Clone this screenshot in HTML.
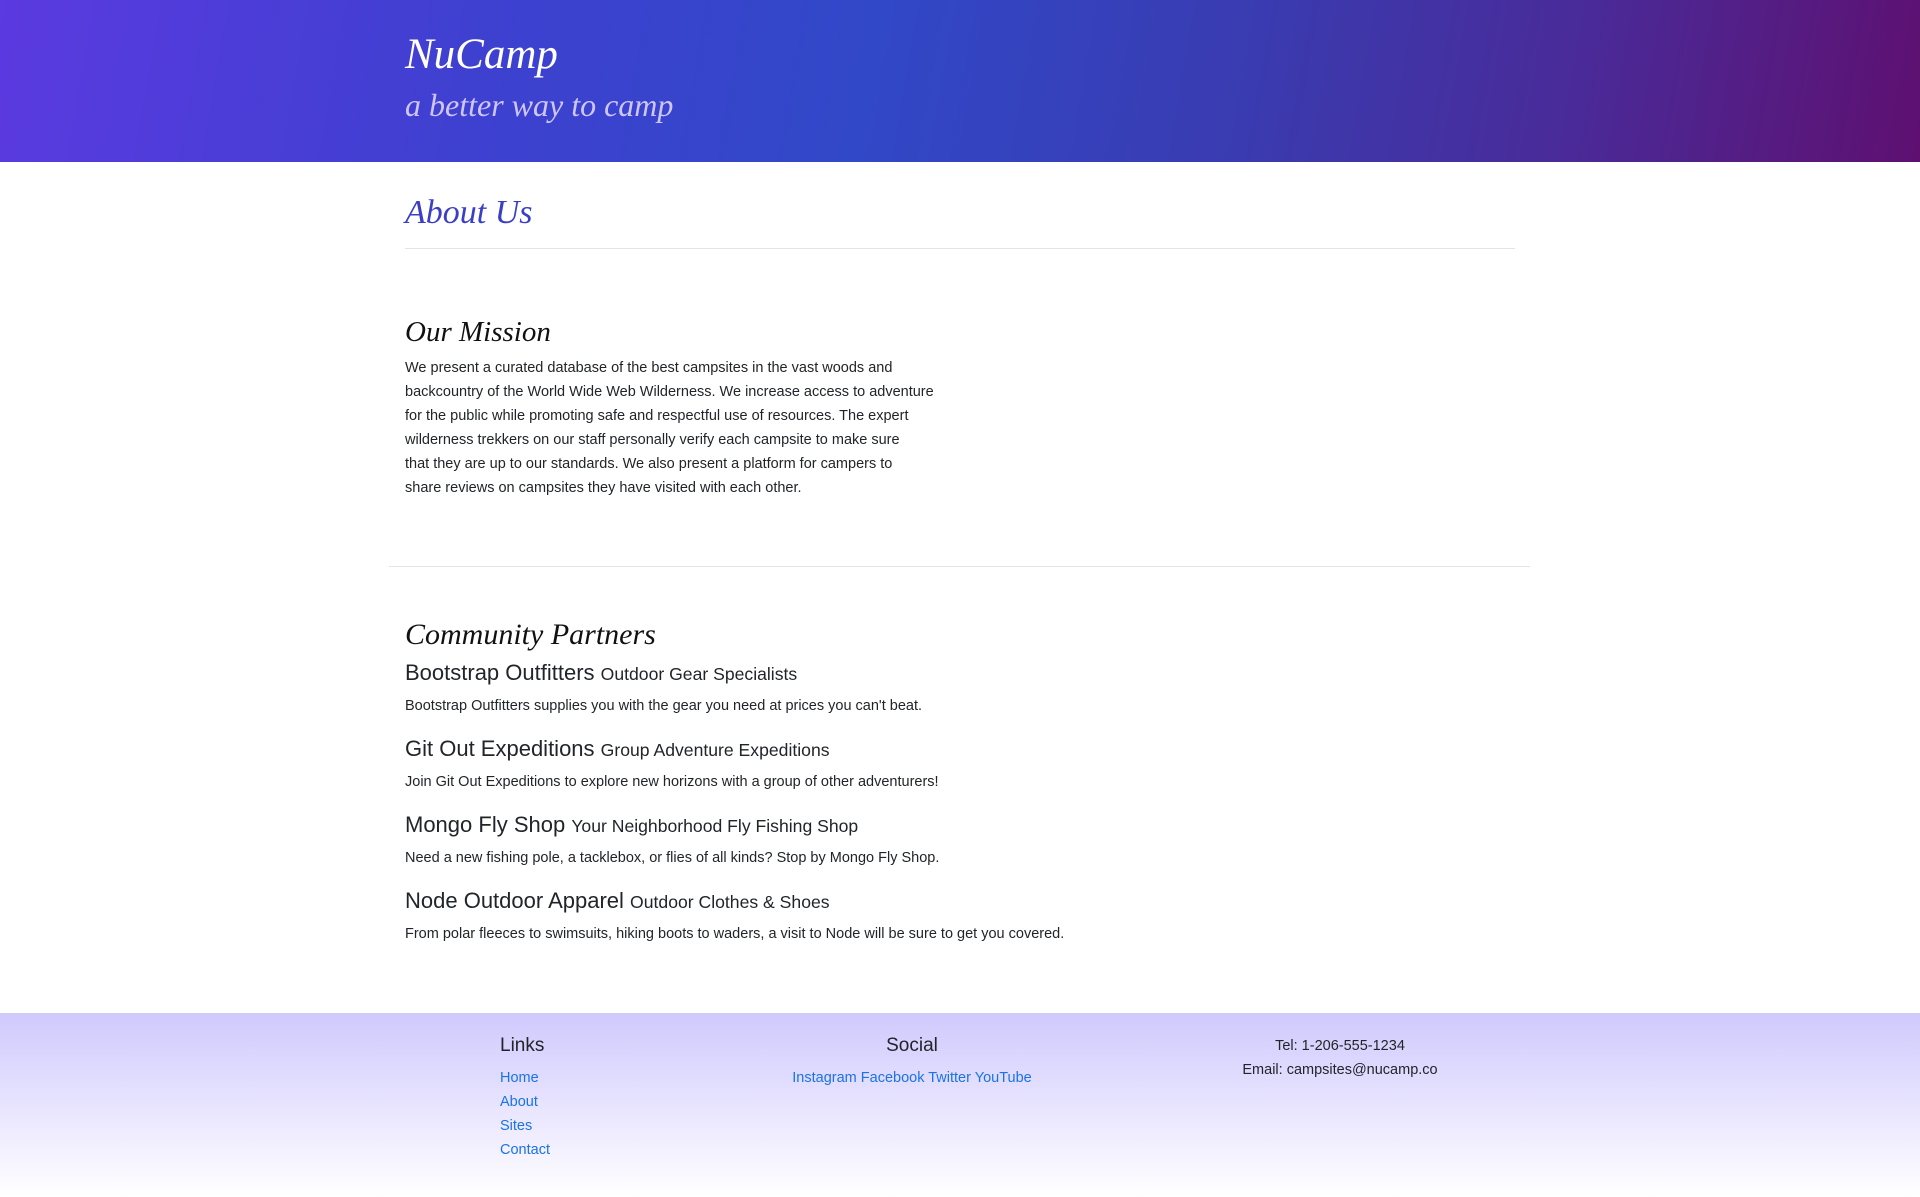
<!DOCTYPE html>
<html><head><meta charset="utf-8"><style>
*{margin:0;padding:0;box-sizing:border-box}
body{width:1920px;height:1197px;font-family:"Liberation Sans",sans-serif;color:#212529;background:#fff;position:relative;overflow:hidden}
.hdr{position:absolute;left:0;top:0;width:1920px;height:162px;background:linear-gradient(100deg,#5b3ae0 0%,#3e40d0 25%,#3148c8 45%,#3a3bb0 65%,#4a2a98 82%,#5e1070 100%)}
.a{position:absolute;white-space:nowrap}
.ser{font-family:"Liberation Serif",serif;font-style:italic}
.hr{position:absolute;height:1px;background:#e5e5e8}
.sm{font-size:14.5px;line-height:24px}
.ft{position:absolute;left:0;top:1013px;width:1920px;height:184px;background:linear-gradient(#d0c9fd,#fff)}
a{color:#1a73e8;text-decoration:none}
</style></head><body>
<div class="hdr"></div>
<div class="a ser" style="left:405px;top:30px;font-size:43px;color:#fff">NuCamp</div>
<div class="a ser" style="left:405px;top:87px;font-size:32px;color:#cfc6ff">a better way to camp</div>
<div class="a ser" style="left:405px;top:194px;font-size:34px;color:#3a3fc4">About Us</div>
<div class="hr" style="left:405px;top:248px;width:1110px"></div>
<div class="a ser" style="left:405px;top:316px;font-size:29px;color:#111">Our Mission</div>
<div class="a sm" style="left:405px;top:356px">We present a curated database of the best campsites in the vast woods and<br>backcountry of the World Wide Web Wilderness. We increase access to adventure<br>for the public while promoting safe and respectful use of resources. The expert<br>wilderness trekkers on our staff personally verify each campsite to make sure<br>that they are up to our standards. We also present a platform for campers to<br>share reviews on campsites they have visited with each other.</div>
<div class="hr" style="left:389px;top:566px;width:1141px"></div>
<div class="a ser" style="left:405px;top:618px;font-size:30px;color:#111">Community Partners</div>
<div class="a" style="left:405px;top:660px;font-size:22px">Bootstrap Outfitters <span style="font-size:17.6px">Outdoor Gear Specialists</span></div>
<div class="a sm" style="left:405px;top:694px">Bootstrap Outfitters supplies you with the gear you need at prices you can't beat.</div>
<div class="a" style="left:405px;top:736px;font-size:22px">Git Out Expeditions <span style="font-size:17.6px">Group Adventure Expeditions</span></div>
<div class="a sm" style="left:405px;top:770px">Join Git Out Expeditions to explore new horizons with a group of other adventurers!</div>
<div class="a" style="left:405px;top:812px;font-size:22px">Mongo Fly Shop <span style="font-size:17.6px">Your Neighborhood Fly Fishing Shop</span></div>
<div class="a sm" style="left:405px;top:846px">Need a new fishing pole, a tacklebox, or flies of all kinds? Stop by Mongo Fly Shop.</div>
<div class="a" style="left:405px;top:888px;font-size:22px">Node Outdoor Apparel <span style="font-size:17.6px">Outdoor Clothes &amp; Shoes</span></div>
<div class="a sm" style="left:405px;top:922px">From polar fleeces to swimsuits, hiking boots to waders, a visit to Node will be sure to get you covered.</div>
<div class="ft"></div>
<div class="a" style="left:500px;top:1035px;font-size:19px">Links</div>
<div class="a sm" style="left:500px;top:1066px"><a>Home</a><br><a>About</a><br><a>Sites</a><br><a>Contact</a></div>
<div class="a" style="left:812px;width:200px;text-align:center;top:1035px;font-size:19px">Social</div>
<div class="a sm" style="left:712px;width:400px;text-align:center;top:1066px"><a>Instagram</a> <a>Facebook</a> <a>Twitter</a> <a>YouTube</a></div>
<div class="a sm" style="left:1190px;width:300px;text-align:center;top:1034px">Tel: 1-206-555-1234<br>Email: campsites@nucamp.co</div>
</body></html>
